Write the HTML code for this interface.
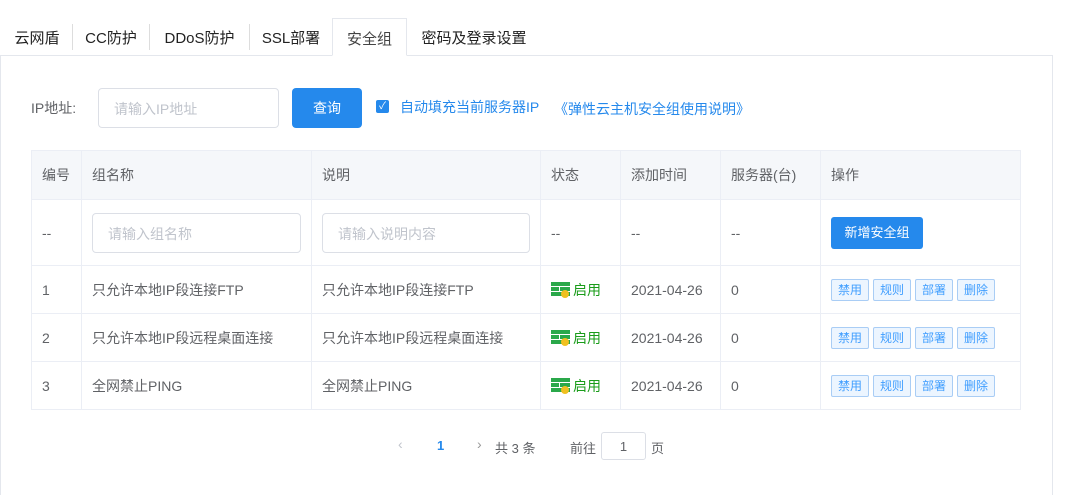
<!DOCTYPE html><html><head><meta charset="utf-8"><style>
*{box-sizing:border-box;margin:0;padding:0}
body{width:1073px;height:489px;background:#fff;font-family:"Liberation Sans","Noto Sans CJK SC",sans-serif;position:relative;overflow:hidden;color:#606266;font-size:14px}
.a{position:absolute}
.tab{position:absolute;top:18px;height:38px;line-height:42px;font-size:15px;color:#222;text-align:center}
.sep{position:absolute;top:24px;width:1px;height:26px;background:#ddd}
.panel{position:absolute;left:0;top:55px;width:1053px;height:440px;border:1px solid #e4e7ed;border-bottom:none}
.inp{position:absolute;border:1px solid #dcdfe6;border-radius:4px;color:#c0c4cc;font-size:14px;padding-left:15px}
table{position:absolute;left:31px;top:150px;border-collapse:collapse;width:990px}
td{border:1px solid #ebeef5;padding-left:10px;font-size:14px;color:#606266}
tr.h td{background:#f5f7fa;height:49px;color:#606266}
.b{display:inline-block;border:1px solid #a9cdf5;background:#ecf5ff;color:#409eff;font-size:12px;height:22px;line-height:20px;width:38px;text-align:center;margin-right:4px;border-radius:2px}
.st{color:#1a9c1a;display:flex;align-items:center;gap:2px}
</style></head><body>
<div class="tab" style="left:8px;width:58px">云网盾</div><div class="sep" style="left:72px"></div>
<div class="tab" style="left:76px;width:70px">CC防护</div><div class="sep" style="left:149px"></div>
<div class="tab" style="left:152px;width:95px">DDoS防护</div><div class="sep" style="left:249px"></div>
<div class="tab" style="left:252px;width:78px">SSL部署</div>
<div class="panel"></div>
<div class="tab" style="left:332px;width:75px;border:1px solid #e4e7ed;border-bottom:1px solid #fff;background:#fff;color:#444;height:38px">安全组</div>
<div class="tab" style="left:410px;width:128px">密码及登录设置</div>
<div class="a" style="left:31px;top:98px;font-size:14px">IP地址:</div>
<div class="inp" style="left:98px;top:88px;width:181px;height:40px;line-height:40px">请输入IP地址</div>
<div class="a" style="left:292px;top:88px;width:70px;height:40px;background:#2589ec;color:#fff;border-radius:4px;text-align:center;line-height:40px">查询</div>
<div class="a" style="left:376px;top:100px;width:13px;height:13px;background:#2589ec;border-radius:2px;color:#fff;font-size:10px;line-height:13px;text-align:center">✓</div>
<div class="a" style="left:400px;top:97px;color:#2589ec;font-size:14px">自动填充当前服务器IP</div>
<div class="a" style="left:554px;top:99px;color:#2589ec;font-size:14px">《弹性云主机安全组使用说明》</div>
<table>
<tr class="h"><td style="width:50px">编号</td><td style="width:230px">组名称</td><td style="width:229px">说明</td><td style="width:80px">状态</td><td style="width:100px">添加时间</td><td style="width:100px">服务器(台)</td><td>操作</td></tr>
<tr style="height:66px"><td>--</td><td><div style="border:1px solid #dcdfe6;border-radius:4px;width:209px;height:40px;line-height:40px;color:#c0c4cc;padding-left:15px">请输入组名称</div></td><td><div style="border:1px solid #dcdfe6;border-radius:4px;width:208px;height:40px;line-height:40px;color:#c0c4cc;padding-left:15px">请输入说明内容</div></td><td>--</td><td>--</td><td>--</td><td><span style="display:inline-block;background:#2589ec;color:#fff;width:92px;height:32px;line-height:32px;text-align:center;border-radius:3px;font-size:13px">新增安全组</span></td></tr>
<tr style="height:48px"><td>1</td><td>只允许本地IP段连接FTP</td><td>只允许本地IP段连接FTP</td><td><span class="st"><svg width="20" height="18"><g fill="#2aa84a"><rect x="0" y="1" width="19" height="4"/><rect x="0" y="6" width="8" height="4"/><rect x="9" y="6" width="10" height="4"/><rect x="0" y="11" width="19" height="4"/></g><circle cx="14" cy="13" r="4" fill="#f0c020"/></svg>启用</span></td><td>2021-04-26</td><td>0</td><td><span class="b">禁用</span><span class="b">规则</span><span class="b">部署</span><span class="b">删除</span></td></tr>
<tr style="height:48px"><td>2</td><td>只允许本地IP段远程桌面连接</td><td>只允许本地IP段远程桌面连接</td><td><span class="st"><svg width="20" height="18"><g fill="#2aa84a"><rect x="0" y="1" width="19" height="4"/><rect x="0" y="6" width="8" height="4"/><rect x="9" y="6" width="10" height="4"/><rect x="0" y="11" width="19" height="4"/></g><circle cx="14" cy="13" r="4" fill="#f0c020"/></svg>启用</span></td><td>2021-04-26</td><td>0</td><td><span class="b">禁用</span><span class="b">规则</span><span class="b">部署</span><span class="b">删除</span></td></tr>
<tr style="height:48px"><td>3</td><td>全网禁止PING</td><td>全网禁止PING</td><td><span class="st"><svg width="20" height="18"><g fill="#2aa84a"><rect x="0" y="1" width="19" height="4"/><rect x="0" y="6" width="8" height="4"/><rect x="9" y="6" width="10" height="4"/><rect x="0" y="11" width="19" height="4"/></g><circle cx="14" cy="13" r="4" fill="#f0c020"/></svg>启用</span></td><td>2021-04-26</td><td>0</td><td><span class="b">禁用</span><span class="b">规则</span><span class="b">部署</span><span class="b">删除</span></td></tr>
</table>
<div class="a" style="left:398px;top:436px;color:#c0c4cc;font-size:14px">‹</div>
<div class="a" style="left:437px;top:438px;color:#2589ec;font-size:13px;font-weight:bold">1</div>
<div class="a" style="left:477px;top:436px;color:#999;font-size:14px">›</div>
<div class="a" style="left:495px;top:438px;font-size:13px">共 3 条</div>
<div class="a" style="left:570px;top:438px;font-size:13px">前往</div>
<div class="a" style="left:601px;top:432px;width:45px;height:28px;border:1px solid #dcdfe6;border-radius:3px;text-align:center;line-height:28px;font-size:13px">1</div>
<div class="a" style="left:651px;top:438px;font-size:13px">页</div>
</body></html>
